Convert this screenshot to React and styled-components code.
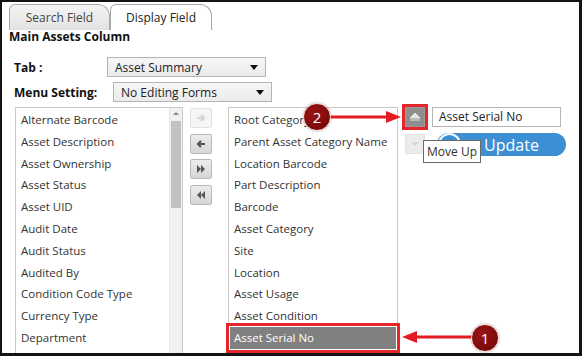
import styled, { createGlobalStyle } from 'styled-components';

const Global = createGlobalStyle`
    body {
        margin: 0;
        font-family: "Open Sans", "Liberation Sans", sans-serif;
        background: #ffffff;
    }
`

const Frame = styled.div`
    position: relative;
    box-sizing: border-box;
    width: 582px;
    height: 356px;
    border: 2px solid #141414;
    border-right-width: 3px;
    border-bottom-width: 3px;
    overflow: hidden;
    background: #fff;
    color: #222;
    font-size: 11.5px;
`

const TabBar = styled.div`
    display: flex;
    margin: 2px 0 0 7px;
    height: 26px;
`

const Tab = styled.div`
    box-sizing: border-box;
    width: ${p => p.$w}px;
    display: flex;
    align-items: center;
    justify-content: center;
    border: 1px solid #a8a8a8;
    border-bottom: none;
    border-radius: 6px 12px 0 0;
    background: ${p => p.$active ? '#fff' : 'linear-gradient(#f4f4f4, #e2e2e2)'};
    color: ${p => p.$active ? '#222' : '#444'};
    font-size: 12px;
`

const Title = styled.div`
    margin-left: 7px;
    height: 14px;
    line-height: 14px;
    font-size: 12px;
    font-weight: 700;
    color: #111;
`

const Form = styled.div`
    display: flex;
    flex-direction: column;
    gap: 5px;
    margin: 13px 0 0 12px;
`

const FormRow = styled.div`
    display: flex;
    align-items: center;
    height: 20px;
`

const Label = styled.div`
    width: 93px;
    font-weight: 700;
    font-size: 12px;
    color: #111;
`

const Select = styled.div`
    box-sizing: border-box;
    display: flex;
    align-items: center;
    justify-content: space-between;
    margin-left: ${p => p.$shift}px;
    width: 159px;
    height: 20px;
    padding: 0 7px 0 7px;
    border: 1px solid #b4b4b4;
    background: linear-gradient(#f6f6f6, #ebebeb);
    font-size: 12px;
    color: #222;
`

const Caret = styled.span`
    width: 0;
    height: 0;
    border-left: 4px solid transparent;
    border-right: 4px solid transparent;
    border-top: 5px solid #111;
`

const Columns = styled.div`
    display: flex;
    align-items: flex-start;
    margin: 5px 0 0 13px;
`

const ListBox = styled.div`
    box-sizing: border-box;
    display: flex;
    width: ${p => p.$w}px;
    height: 252px;
    border: 1px solid #c9c9c9;
    background: #fff;
`

const Items = styled.div`
    flex: 1;
    padding: 1px;
`

const Item = styled.div`
    height: 21.8px;
    line-height: 21.8px;
    padding-left: 4px;
    white-space: nowrap;
    background: ${p => p.$selected ? '#808080' : 'transparent'};
    color: ${p => p.$selected ? '#fff' : '#333'};
    outline: ${p => p.$selected ? '3px solid #e4262c' : 'none'};
    outline-offset: 1px;
`

const Scrollbar = styled.div`
    display: flex;
    flex-direction: column;
    align-items: center;
    width: 12px;
    background: #f1f1f1;
    border-left: 1px solid #e6e6e6;
`

const ScrollUp = styled.span`
    margin: 4px 0 6px;
    width: 0;
    height: 0;
    border-left: 3px solid transparent;
    border-right: 3px solid transparent;
    border-bottom: 3px solid #8a8a8a;
`

const Thumb = styled.div`
    width: 10px;
    height: 87px;
    background: #c2c2c2;
`

const ButtonCol = styled.div`
    display: flex;
    flex-direction: column;
    gap: 5.7px;
    margin: 1px 16px 0 7px;
`

const MoveBtn = styled.div`
    box-sizing: border-box;
    display: flex;
    align-items: center;
    justify-content: center;
    width: 22px;
    height: 20px;
    border: 1px solid ${p => p.$off ? '#e2e2e2' : '#b9b9b9'};
    border-radius: 2px;
    background: ${p => p.$off ? '#f5f5f5' : 'linear-gradient(#ececec, #d6d6d6)'};
    color: ${p => p.$off ? '#d4d4d4' : '#555'};
`

const SideCol = styled.div`
    display: flex;
    flex-direction: column;
    gap: 7px;
    margin-left: 7px;
`

const OrderBtn = styled.div`
    box-sizing: border-box;
    display: flex;
    align-items: center;
    justify-content: center;
    width: 20px;
    height: 20px;
    background: ${p => p.$up ? '#8e8e8e' : '#ececec'};
    color: ${p => p.$up ? '#e8e8e8' : '#d6d6d6'};
    outline: ${p => p.$up ? '3px solid #e4262c' : 'none'};
    outline-offset: 0;
    border: 1px solid ${p => p.$up ? '#9a9a9a' : '#e2e2e2'};
`

const EditCol = styled.div`
    display: flex;
    flex-direction: column;
    gap: 6px;
    margin-left: 7px;
`

const Input = styled.div`
    box-sizing: border-box;
    width: 129px;
    height: 20px;
    padding-left: 6px;
    line-height: 18px;
    border: 1px solid #b6b6b6;
    font-size: 12px;
    color: #222;
`

const UpdateBtn = styled.div`
    position: relative;
    box-sizing: border-box;
    display: flex;
    align-items: center;
    margin-left: 5px;
    width: 129px;
    height: 23px;
    border-radius: 12px;
    background: #3c8fd3;
    color: #fff;
    font-size: 16px;
`

const UpdateIcon = styled.div`
    box-sizing: border-box;
    width: 23px;
    height: 23px;
    margin-left: 1px;
    border: 2px solid #fff;
    border-radius: 50%;
    background: #3c8fd3;
`

const UpdateText = styled.span`
    flex: 1;
    text-align: center;
    padding-right: 4px;
`

const Tooltip = styled.div`
    position: absolute;
    left: 421px;
    top: 138px;
    box-sizing: border-box;
    width: 58px;
    height: 23px;
    line-height: 21px;
    text-align: center;
    border: 1px solid #6a6a6a;
    background: #fff;
    color: #333;
    font-size: 12px;
`

const Badge = styled.div`
    position: absolute;
    left: ${p => p.$x}px;
    top: ${p => p.$y}px;
    width: 26px;
    height: 26px;
    border-radius: 50%;
    border: 1px solid #f2d0d0;
    background: radial-gradient(circle at 40% 35%, #9a1414, #6e0707);
    color: #fff;
    font-size: 15px;
    line-height: 26px;
    text-align: center;
    box-shadow: 0 0 2px rgba(0, 0, 0, 0.4);
`

const Arrow = styled.svg`
    position: absolute;
    left: ${p => p.$x}px;
    top: ${p => p.$y}px;
`

const leftItems = [
    'Alternate Barcode', 'Asset Description', 'Asset Ownership', 'Asset Status',
    'Asset UID', 'Audit Date', 'Audit Status', 'Audited By', 'Condition Code Type',
    'Currency Type', 'Department', 'Group Code',
]

const rightItems = [
    'Root Category', 'Parent Asset Category Name', 'Location Barcode', 'Part Description',
    'Barcode', 'Asset Category', 'Site', 'Location', 'Asset Usage', 'Asset Condition',
    'Asset Serial No',
]

function Glyph({ kind }) {
    const d = {
        right: 'M3 7h6M7 4l3 3-3 3',
        left: 'M11 7H5M7 4L4 7l3 3',
    }[kind]
    if (d) {
        return (
            <svg width="14" height="14" viewBox="0 0 14 14">
                <path d={d} stroke="currentColor" strokeWidth="2.2" fill="none" />
            </svg>
        )
    }
    const pts = kind === 'allRight'
        ? ['3,3 7,7 3,11', '7,3 11,7 7,11']
        : ['7,3 3,7 7,11', '11,3 7,7 11,11']
    return (
        <svg width="14" height="14" viewBox="0 0 14 14">
            {pts.map(p => <polygon key={p} points={p} fill="currentColor" />)}
        </svg>
    )
}

function OrderGlyph({ up }) {
    return (
        <svg width="14" height="12" viewBox="0 0 14 12">
            {up
                ? <path d="M2 7 L7 2 L12 7 Z M2 9 h10" stroke="currentColor" strokeWidth="1" fill="currentColor" />
                : <path d="M3 4 L7 8 L11 4 Z" fill="currentColor" />}
        </svg>
    )
}

function App() {
    return (
        <Frame>
            <Global />
            <TabBar>
                <Tab $w={101}>Search Field</Tab>
                <Tab $w={102} $active>Display Field</Tab>
            </TabBar>
            <Title>Main Assets Column</Title>
            <Form>
                <FormRow>
                    <Label>Tab :</Label>
                    <Select $shift={0}>Asset Summary <Caret /></Select>
                </FormRow>
                <FormRow>
                    <Label>Menu Setting:</Label>
                    <Select $shift={6}>No Editing Forms <Caret /></Select>
                </FormRow>
            </Form>
            <Columns>
                <ListBox $w={168}>
                    <Items>
                        {leftItems.map(t => <Item key={t}>{t}</Item>)}
                    </Items>
                    <Scrollbar>
                        <ScrollUp />
                        <Thumb />
                    </Scrollbar>
                </ListBox>
                <ButtonCol>
                    <MoveBtn $off><Glyph kind="right" /></MoveBtn>
                    <MoveBtn><Glyph kind="left" /></MoveBtn>
                    <MoveBtn><Glyph kind="allRight" /></MoveBtn>
                    <MoveBtn><Glyph kind="allLeft" /></MoveBtn>
                </ButtonCol>
                <ListBox $w={170}>
                    <Items>
                        {rightItems.map(t => (
                            <Item key={t} $selected={t === 'Asset Serial No'}>{t}</Item>
                        ))}
                    </Items>
                </ListBox>
                <SideCol>
                    <OrderBtn $up><OrderGlyph up /></OrderBtn>
                    <OrderBtn><OrderGlyph /></OrderBtn>
                </SideCol>
                <EditCol>
                    <Input>Asset Serial No</Input>
                    <UpdateBtn>
                        <UpdateIcon />
                        <UpdateText>Update</UpdateText>
                    </UpdateBtn>
                </EditCol>
            </Columns>
            <Tooltip>Move Up</Tooltip>
            <Arrow $x={328} $y={107} width="72" height="18" viewBox="0 0 72 18">
                <line x1="0" y1="8" x2="58" y2="8" stroke="#e31b22" strokeWidth="3" />
                <polygon points="56,2 71,8 56,14" fill="#e31b22" />
            </Arrow>
            <Badge $x={301} $y={101}>2</Badge>
            <Arrow $x={399} $y={327} width="72" height="18" viewBox="0 0 72 18">
                <polygon points="1,8 16,2 16,14" fill="#e31b22" />
                <line x1="14" y1="8" x2="72" y2="8" stroke="#e31b22" strokeWidth="3" />
            </Arrow>
            <Badge $x={469} $y={322}>1</Badge>
        </Frame>
    )
}

export default App;
